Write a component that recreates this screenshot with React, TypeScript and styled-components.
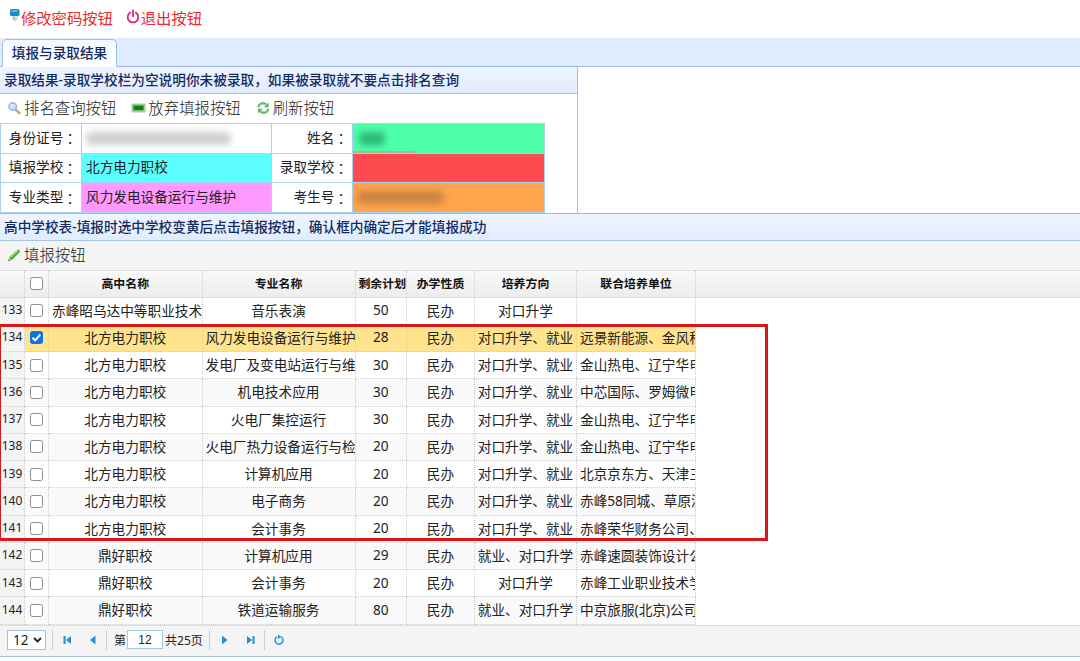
import React from 'react';
import styled, { createGlobalStyle, css } from 'styled-components';

const GlobalStyle = createGlobalStyle`
  * { box-sizing: border-box; }
  body {
    margin: 0;
    background: #fff;
    font-family: "Noto Sans", "Noto Sans CJK SC", sans-serif;
    font-size: 13.65px;
    color: #222;
    overflow: hidden;
  }
`;

const Page = styled.div`
  width: 1080px;
  height: 661px;
  display: flex;
  flex-direction: column;
  overflow: hidden;
  white-space: nowrap;
`;

const AccountBar = styled.header`
  height: 38px;
  display: flex;
  align-items: center;
  gap: 13px;
  padding: 0 8px 4px;
`;

const AccountLink = styled.a`
  display: flex;
  align-items: center;
  font-family: "Noto Sans CJK SC", sans-serif;
  font-weight: 400;
  font-size: 15.3px;
  line-height: 20px;
  color: #ec2a30;
`;

const TabStrip = styled.nav`
  height: 29px;
  display: flex;
  align-items: flex-end;
  padding-left: 2px;
  background: #e0ecfd;
  border-bottom: 1px solid #9dbbdc;
`;

const Tab = styled.div`
  width: 115px;
  height: 28px;
  margin-bottom: -1px;
  display: flex;
  justify-content: center;
  padding-top: 1px;
  line-height: 23px;
  border: 1px solid #9dbfe4;
  border-bottom: 0;
  border-radius: 5px 5px 0 0;
  background: linear-gradient(#f3f8ff, #fff 70%);
  color: #152b5e;
  font-weight: 500;
`;

const ResultPanel = styled.section`
  width: 578px;
  height: 146px;
  border-right: 1px solid #a3bfdd;
`;

const PanelTitle = styled.h2`
  margin: 0;
  height: 27px;
  padding-left: 4px;
  line-height: 26px;
  font-size: 13.67px;
  font-weight: 500;
  color: #152b5e;
  background: linear-gradient(#eff5ff, #e0ecff);
  border-bottom: 1px solid #a6c6e4;
`;

const Toolbar = styled.div<{ $shaded?: boolean }>`
  height: 29px;
  display: flex;
  align-items: center;
  gap: 15px;
  padding: 0 0 1px 7px;
  background: ${p => (p.$shaded ? '#f4f4f4' : '#fff')};
`;

const ToolButton = styled.div`
  display: flex;
  align-items: center;
  gap: 2px;
  font-family: "Noto Sans CJK SC", sans-serif;
  font-weight: 300;
  font-size: 15.4px;
  line-height: 22px;
  color: #222;
`;

const ToolText = styled.span`
  padding-bottom: 2px;
`;

const InfoGrid = styled.div`
  width: 545px;
  height: 90px;
  display: grid;
  grid-template-columns: 81px 190px 81px 192px;
  grid-template-rows: 29.67px 29.67px 29.67px;
  border-top: 1px solid #a9d3ec;
  border-left: 1px solid #a9d3ec;
`;

const InfoCell = styled.div<{ $fill?: string; $label?: boolean }>`
  display: flex;
  align-items: center;
  justify-content: ${p => (p.$label ? 'flex-end' : 'flex-start')};
  padding: 0 4px 3px;
  border-right: 1px solid #a9d3ec;
  border-bottom: 1px solid #a9d3ec;
  background: ${p => p.$fill || '#fff'};
`;

const LabelColon = styled.span`
  font-family: "Noto Sans CJK TC", sans-serif;
  padding-top: 3px;
`;

const Label = ({ text }: { text: string }) => (
  <InfoCell $label><span>{text}</span><LabelColon>：</LabelColon></InfoCell>
);

const Smudge = styled.span<{ $w: number; $tone: string }>`
  width: ${p => p.$w}px;
  height: 13px;
  margin-top: 3px;
  border-radius: 5px;
  filter: blur(3.5px);
  background: ${p => p.$tone};
`;

const NameValue = styled.div`
  align-self: stretch;
  margin: 0 0 -3px -4px;
  width: 62px;
  display: flex;
  align-items: center;
  padding-left: 6px;
  border-bottom: 2px solid #a5b790;
`;

const SchoolPanel = styled.section`
  display: flex;
  flex-direction: column;
  border-top: 1px solid #95b8e7;
`;

const columns = '25px 24px 153.5px 153px 51.5px 68px 102px 119px';

const HeadRow = styled.div`
  height: 27.5px;
  display: grid;
  grid-template-columns: ${columns};
  background: linear-gradient(#f9f9f9, #ececec);
  border-top: 1px solid #ddd;
  border-bottom: 1px solid #ddd;
`;

const GridBody = styled.div`
  position: relative;
`;

const Cell = styled.div<{ $head?: boolean; $index?: boolean; $left?: boolean; $tight?: boolean }>`
  display: flex;
  align-items: center;
  justify-content: ${p => (p.$left ? 'flex-start' : 'center')};
  min-width: 0;
  overflow: hidden;
  padding-bottom: 2px;
  padding-left: ${p => (p.$left || p.$tight ? 3 : 0)}px;
  border-right: 1px dotted #ccc;
  ${p => !p.$head && css`border-bottom: 1px dotted #ccc;`}
  ${p => p.$head && css`
    font-size: 11.9px;
    font-weight: 700;
    color: #111;
  `}
  ${p => p.$index && css`
    font-size: 12px;
    background: #f4f4f4;
  `}
`;

const CheckCell = styled(Cell)`
  padding-bottom: 0;
`;

const Row = styled.div<{ $selected: boolean; $even: boolean }>`
  width: 696px;
  height: 27.25px;
  display: grid;
  grid-template-columns: ${columns};
  background: ${p => (p.$selected ? '#ffe48d' : p.$even ? '#fafafa' : '#fff')};
`;

const CheckBox = styled.span<{ $on?: boolean }>`
  width: 13px;
  height: 13px;
  display: flex;
  align-items: center;
  justify-content: center;
  border: 1px solid ${p => (p.$on ? '#0b73e8' : '#8d8d8d')};
  border-radius: 2.5px;
  background: ${p => (p.$on ? '#0b73e8' : '#fff')};
`;

const Highlight = styled.div`
  position: absolute;
  left: -2px;
  top: 26px;
  width: 770px;
  height: 217.5px;
  border: 3px solid #d8171b;
`;

const Pager = styled.footer`
  height: 32px;
  display: flex;
  align-items: center;
  padding: 0 0 2px 7px;
  background: #f4f4f4;
  border-top: 1px solid #ddd;
  border-bottom: 1px solid #a8bdda;
  font-size: 12px;
`;

const PageSize = styled.div`
  width: 39px;
  height: 20px;
  display: flex;
  align-items: center;
  gap: 5px;
  padding-left: 5px;
  border: 1px solid #a3c0dd;
  background: #fff;
  font-size: 13.5px;
`;

const Divider = styled.span<{ $l: number; $r: number }>`
  width: 1px;
  height: 20px;
  margin: 0 ${p => p.$r}px 0 ${p => p.$l}px;
  background: #ccc;
`;

const PageInput = styled.div`
  width: 36px;
  height: 19px;
  margin: 0 2px 0 1px;
  display: flex;
  align-items: center;
  justify-content: center;
  border: 1px solid #a3c9dd;
  background: #fff;
  font-family: "Liberation Sans", sans-serif;
`;

const NavIcon = styled.svg<{ $gap?: number }>`
  width: 10px;
  height: 10px;
  margin-right: ${p => p.$gap || 0}px;
  fill: #218fd5;
  overflow: visible;
`;

const Tick = () => (
  <svg width="11" height="11" viewBox="0 0 11 11" fill="none" stroke="#fff" strokeWidth="2">
    <path d="M1.5 5.8 4.2 8.3 9.3 2.5" />
  </svg>
);

const BadgeIcon = () => (
  <svg width="13" height="20" viewBox="0 0 13 20">
    <path d="M4 9h6v3L7.5 15 4 12z" fill="#d4e3ed" />
    <rect x="2" y="2" width="9.5" height="7" rx="1.5" fill="#168ec8" />
    <path d="M3.5 4h6" stroke="#79cdf0" strokeWidth="1.4" />
    <path d="M6 10v2l1 1" stroke="#65a7c7" strokeWidth="1" fill="none" />
  </svg>
);

const PowerIcon = () => (
  <svg width="15" height="16" viewBox="0 0 15 16" fill="none" stroke="#de267c" strokeWidth="1.8" strokeLinecap="round">
    <path d="M4.3 3.6a5.3 5.3 0 1 0 5.4 0M7 1.3v6" />
  </svg>
);

const SearchIcon = () => (
  <svg width="15" height="15" viewBox="0 0 15 15">
    <path d="m8.5 8.5 4 3.7" stroke="#d9a366" strokeWidth="2.5" strokeLinecap="round" />
    <circle cx="5.7" cy="5.6" r="3.8" fill="#c6e3fb" stroke="#8fb3df" strokeWidth="1.4" />
    <path d="M3.8 5.2q.6-1.8 2.3-1.5" stroke="#fff" fill="none" />
  </svg>
);

const CardIcon = () => (
  <svg width="15" height="12" viewBox="0 0 15 12">
    <rect x=".5" y="1.5" width="14" height="9" rx="1" fill="#a2cc9a" />
    <rect x="2.5" y="3.5" width="10" height="4.7" fill="#0b8411" />
  </svg>
);

const ReloadIcon = () => (
  <svg width="15" height="14" viewBox="0 0 15 14" fill="none" stroke="#5dad69" strokeWidth="2.4">
    <path d="M2.4 6.2C3 2.6 7 1 10 3.6M12.2 7.8C11.600 11.400 7.600 13 4.600 10.400" />
    <path d="M12.6 1.600v4.700H7.900zM2 12.400V7.700h4.700z" fill="#5dad69" stroke="none" />
    <path d="M2.900 5.800C3.800 3 7 2.300 9.300 4M11.700 8.200c-.9 2.800-4.100 3.500-6.400 1.800" stroke="#c4e6c6" strokeWidth=".8" />
  </svg>
);

const PencilIcon = () => (
  <svg width="15" height="15" viewBox="0 0 15 15">
    <path d="m1.3 13 1.2-4 7.7-7.1q1.1-.8 2.1.2t.2 2.1L5.2 11.8z" fill="#50a638" />
    <path d="m3.4 9.5 7.4-6.9" stroke="#a4df76" strokeWidth="1.4" />
    <path d="m1.3 13 1.1-3.6 2.4 2.2z" fill="#c8b484" />
    <path d="m1.3 13 .5-1.5 1 .9z" fill="#444" />
  </svg>
);

type School = [number, string, string, number, string, string];
const schools: School[] = [
  [133, '赤峰昭乌达中等职业技术', '音乐表演', 50, '对口升学', ''],
  [134, '北方电力职校', '风力发电设备运行与维护', 28, '对口升学、就业', '远景新能源、金风科'],
  [135, '北方电力职校', '发电厂及变电站运行与维', 30, '对口升学、就业', '金山热电、辽宁华电'],
  [136, '北方电力职校', '机电技术应用', 30, '对口升学、就业', '中芯国际、罗姆微电'],
  [137, '北方电力职校', '火电厂集控运行', 30, '对口升学、就业', '金山热电、辽宁华电'],
  [138, '北方电力职校', '火电厂热力设备运行与检', 20, '对口升学、就业', '金山热电、辽宁华电'],
  [139, '北方电力职校', '计算机应用', 20, '对口升学、就业', '北京京东方、天津三'],
  [140, '北方电力职校', '电子商务', 20, '对口升学、就业', '赤峰58同城、草原漠'],
  [141, '北方电力职校', '会计事务', 20, '对口升学、就业', '赤峰荣华财务公司、'],
  [142, '鼎好职校', '计算机应用', 29, '就业、对口升学', '赤峰速圆装饰设计公'],
  [143, '鼎好职校', '会计事务', 20, '对口升学', '赤峰工业职业技术学'],
  [144, '鼎好职校', '铁道运输服务', 80, '就业、对口升学', '中京旅服(北京)公司'],
];
const headings = ['高中名称', '专业名称', '剩余计划', '办学性质', '培养方向', '联合培养单位'];

export default function App() {
  return (
    <>
      <GlobalStyle />
      <Page>
        <AccountBar>
          <AccountLink><BadgeIcon />修改密码按钮</AccountLink>
          <AccountLink><PowerIcon />退出按钮</AccountLink>
        </AccountBar>
        <TabStrip><Tab>填报与录取结果</Tab></TabStrip>

        <ResultPanel>
          <PanelTitle>录取结果-录取学校栏为空说明你未被录取，如果被录取就不要点击排名查询</PanelTitle>
          <Toolbar>
            <ToolButton><SearchIcon /><ToolText>排名查询按钮</ToolText></ToolButton>
            <ToolButton><CardIcon /><ToolText>放弃填报按钮</ToolText></ToolButton>
            <ToolButton><ReloadIcon /><ToolText>刷新按钮</ToolText></ToolButton>
          </Toolbar>
          <InfoGrid>
            <Label text="身份证号" />
            <InfoCell><Smudge $w={145} $tone="#cfcfcf" /></InfoCell>
            <Label text="姓名" />
            <InfoCell $fill="#4dffa8"><NameValue><Smudge $w={26} $tone="#2bb878" /></NameValue></InfoCell>
            <Label text="填报学校" />
            <InfoCell $fill="#5cffff">北方电力职校</InfoCell>
            <Label text="录取学校" />
            <InfoCell $fill="#ff4b4f" />
            <Label text="专业类型" />
            <InfoCell $fill="#ff99ff">风力发电设备运行与维护</InfoCell>
            <Label text="考生号" />
            <InfoCell $fill="#ffa54c"><Smudge $w={87} $tone="#c98443" /></InfoCell>
          </InfoGrid>
        </ResultPanel>

        <SchoolPanel>
          <PanelTitle>高中学校表-填报时选中学校变黄后点击填报按钮，确认框内确定后才能填报成功</PanelTitle>
          <Toolbar $shaded><ToolButton><PencilIcon /><ToolText>填报按钮</ToolText></ToolButton></Toolbar>
          <HeadRow>
            <Cell $head />
            <CheckCell $head><CheckBox /></CheckCell>
            {headings.map(h => <Cell $head $tight={h === '剩余计划'} key={h}>{h}</Cell>)}
          </HeadRow>
          <GridBody>
            {schools.map(([no, school, major, left, direction, partner]) => (
              <Row key={no} $selected={no === 134} $even={no % 2 === 0}>
                <Cell $index>{no}</Cell>
                <CheckCell><CheckBox $on={no === 134}>{no === 134 && <Tick />}</CheckBox></CheckCell>
                <Cell $left={school.length > 10}>{school}</Cell>
                <Cell $left={major.length > 10}>{major}</Cell>
                <Cell>{left}</Cell>
                <Cell>民办</Cell>
                <Cell>{direction}</Cell>
                <Cell $left>{partner}</Cell>
              </Row>
            ))}
            <Highlight />
          </GridBody>
          <Pager>
            <PageSize>
              12
              <svg width="9" height="6" viewBox="0 0 9 6" fill="none" stroke="#222" strokeWidth="1.8"><path d="m1 1 3.5 3.5L8 1" /></svg>
            </PageSize>
            <Divider $l={6} $r={9} />
            <NavIcon $gap={16} viewBox="0 0 10 10"><path d="M1.500 1h2v8h-2zM9 1v8L4 5z" /></NavIcon>
            <NavIcon $gap={8} viewBox="0 0 10 10"><path d="M7.500.5v9L2 5z" /></NavIcon>
            <Divider $l={0} $r={7} />
            第<PageInput>12</PageInput>共25页
            <Divider $l={6} $r={10} />
            <NavIcon $gap={16} viewBox="0 0 10 10"><path d="M2 .5v9L7.500 5z" /></NavIcon>
            <NavIcon $gap={8} viewBox="0 0 10 10"><path d="M6.500 1h2v8h-2zM1 1v8L6 5z" /></NavIcon>
            <Divider $l={0} $r={9} />
            <NavIcon viewBox="0 0 10 10">
              <path d="M2.700 1.900A4 4 0 1 0 7.300 1.900" fill="none" stroke="#2b94d3" strokeWidth="1.500" />
              <path d="M3.800-.5v4.500L7.500 1.700z" />
            </NavIcon>
          </Pager>
        </SchoolPanel>
      </Page>
    </>
  );
}
